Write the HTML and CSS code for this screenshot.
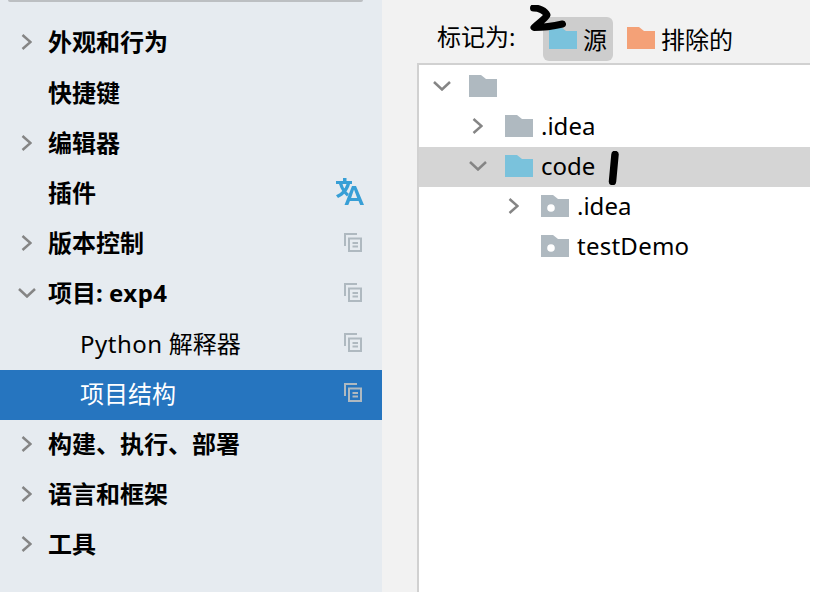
FILE: index.html
```html
<!DOCTYPE html>
<html lang="zh-CN">
<head>
<meta charset="utf-8">
<title>项目结构</title>
<link rel="stylesheet" href="styles.css">
</head>
<body>
<svg class="defs" width="0" height="0" aria-hidden="true">
  <defs>
    <symbol id="chev-r" viewBox="0 0 11 16"><path d="M1.500 1 9.500 8 1.500 15" fill="none" stroke="#858585" stroke-width="2.500"/></symbol>
    <symbol id="chev-d" viewBox="0 0 18 10"><path d="M1 1 9 8.500 17 1" fill="none" stroke="#858585" stroke-width="2.500"/></symbol>
    <symbol id="folder" viewBox="0 0 28 22"><path d="M0 0H12L17 4H28V22H0Z"/></symbol>
    <symbol id="folder-dot" viewBox="0 0 28 22"><path d="M0 0H12L17 4H28V22H0Z" fill="#afb9c0"/><circle cx="10" cy="13" r="3.800" fill="#fff"/></symbol>
    <symbol id="layers" viewBox="0 0 18 19"><path d="M13 1H1V13" fill="none" stroke="#afb9c0" stroke-width="2"/><path d="M5 5.500H17V18H5ZM8.500 10H14M8.500 13.500H14" fill="none" stroke="#afb9c0" stroke-width="2"/></symbol>
  </defs>
</svg>
<div class="app">
  <aside class="sidebar">
    <div class="search-edge"></div>
    <ul class="nav">
      <li class="nav-row bold"><svg class="chev"><use href="#chev-r"/></svg><span class="label">外观和行为</span></li>
      <li class="nav-row bold"><span class="chev"></span><span class="label">快捷键</span></li>
      <li class="nav-row bold"><svg class="chev"><use href="#chev-r"/></svg><span class="label">编辑器</span></li>
      <li class="nav-row bold"><span class="chev"></span><span class="label">插件</span>
        <svg class="translate" viewBox="0 0 28 27"><path d="M7 0H10.500V3H16V6H0V3H7ZM3 6H6.500C7.500 10 10 13.500 13 16L11 18.500C7.500 15.500 4.500 11 3 6ZM10.500 6H14C12.500 12 8.500 17 2 20L0 17.200C5.500 14.800 9 11 10.500 6Z" fill="#389fd6"/><path d="M16 8H20L28 27H24.200L22.600 23H13.900L12.300 27H8.500ZM18 11.500 15.100 20H21.200Z" fill="#389fd6"/></svg></li>
      <li class="nav-row bold"><svg class="chev"><use href="#chev-r"/></svg><span class="label">版本控制</span><svg class="layer-icon"><use href="#layers"/></svg></li>
      <li class="nav-row bold"><svg class="chev-open"><use href="#chev-d"/></svg><span class="label">项目: <span class="latin-wide">exp4</span></span><svg class="layer-icon"><use href="#layers"/></svg></li>
      <li class="nav-row child"><span class="label"><span class="latin-wide">Python</span> 解释器</span><svg class="layer-icon"><use href="#layers"/></svg></li>
      <li class="nav-row child selected"><span class="label">项目结构</span><svg class="layer-icon"><use href="#layers"/></svg></li>
      <li class="nav-row bold"><svg class="chev"><use href="#chev-r"/></svg><span class="label">构建、执行、部署</span></li>
      <li class="nav-row bold"><svg class="chev"><use href="#chev-r"/></svg><span class="label">语言和框架</span></li>
      <li class="nav-row bold"><svg class="chev"><use href="#chev-r"/></svg><span class="label">工具</span></li>
    </ul>
  </aside>
  <main class="content">
    <div class="toolbar">
      <span class="mark-label">标记为:</span>
      <div class="tool-btn active"><svg class="folder blue"><use href="#folder"/></svg><span>源</span></div>
      <div class="tool-btn"><svg class="folder orange"><use href="#folder"/></svg><span>排除的</span></div>
      <svg class="scribble-two" viewBox="0 0 36 28"><path d="M3.500 3C9 3 15 5.500 17 10C16 13 10 17 4 22.500C12 22.500 24 21 32.500 19" fill="none" stroke="#000" stroke-width="7" stroke-linecap="round" stroke-linejoin="round"/></svg>
    </div>
    <div class="tree">
      <div class="tree-row"><span class="twist"><svg class="chev-open"><use href="#chev-d"/></svg></span><svg class="folder gray"><use href="#folder"/></svg></div>
      <div class="tree-row depth-1"><span class="twist"><svg class="chev"><use href="#chev-r"/></svg></span><svg class="folder gray"><use href="#folder"/></svg><span class="name">.idea</span></div>
      <div class="tree-row depth-1 picked"><span class="twist"><svg class="chev-open"><use href="#chev-d"/></svg></span><svg class="folder blue"><use href="#folder"/></svg><span class="name">code</span>
        <svg class="scribble-one" viewBox="0 0 11 34"><path d="M7 3.500 4.500 30.500" fill="none" stroke="#000" stroke-width="7.500" stroke-linecap="round"/></svg></div>
      <div class="tree-row depth-2"><span class="twist"><svg class="chev"><use href="#chev-r"/></svg></span><svg class="folder"><use href="#folder-dot"/></svg><span class="name">.idea</span></div>
      <div class="tree-row depth-2"><span class="twist"></span><svg class="folder"><use href="#folder-dot"/></svg><span class="name wide">testDemo</span></div>
    </div>
  </main>
</div>
</body>
</html>
```
FILE: styles.css
```css
* { box-sizing: border-box; }
html, body { margin: 0; height: 100%; overflow: hidden; }
body {
  font-family: "Noto Sans", "Noto Sans CJK SC", sans-serif;
  font-size: 24px;
  color: #000;
  background: #fff;
}
.defs { position: absolute; }
.app { display: flex; width: 810px; height: 592px; background: #f2f2f2; }

.sidebar { flex: 0 0 382px; background: #e6ebf0; }
.search-edge { height: 2px; margin: 0 19px 0 8px; background: #bcbfc2; border-radius: 0 0 2px 2px; }
.nav { list-style: none; margin: 0; padding: 16.4px 0 0; }
.nav-row { display: flex; align-items: center; height: 50.2px; padding: 0 20px 2px 21px; }
.nav-row.bold { font-weight: 700; }
.nav-row .label { white-space: nowrap; line-height: 30px; }
.latin-wide { letter-spacing: 0.5px; }
.nav-row .chev { flex: 0 0 11px; width: 11px; height: 16px; margin-right: 16px; }
.nav-row > .chev-open { flex: 0 0 18px; width: 18px; height: 10px; margin: 0 12px 0 -3px; }
.nav-row.child { padding-left: 80px; }
.nav-row.selected { background: #2675bf; color: #fff; }
.layer-icon { width: 18px; height: 19px; margin: 0 0 2px auto; }
.translate { width: 28px; height: 27px; margin: 0 -2px 3px auto; }

.content { flex: 1; display: flex; flex-direction: column; min-width: 0; padding-left: 35px; }
.toolbar { position: relative; flex: 0 0 63px; display: flex; align-items: flex-end; padding: 0 0 2px 20px; }
.mark-label { width: 106px; padding-bottom: 9px; white-space: nowrap; line-height: 30px; }
.tool-btn { display: flex; align-items: center; gap: 6px; height: 44px; padding: 0 6px; margin-right: 8px; line-height: 30px; border-radius: 6px; white-space: nowrap; }
.tool-btn.active { background: #cdcdcd; }
.tool-btn .folder { margin-bottom: 2px; }
.tool-btn span { margin-top: 2px; }
.scribble-two { position: absolute; left: 113px; top: 5px; width: 36px; height: 28px; }

.tree { flex: 1; background: #fff; border-top: 2px solid #d1d1d1; border-left: 2px solid #d1d1d1; padding-top: 2px; }
.tree-row { position: relative; display: flex; align-items: center; height: 40px; padding: 0 0 2px 14px; }
.tree-row.depth-1 { padding-left: 50px; }
.tree-row.depth-2 { padding-left: 86px; }
.tree-row.picked { background: #d5d5d5; }
.twist { flex: 0 0 36px; display: flex; align-items: center; }
.twist .chev { width: 11px; height: 16px; margin-left: 3px; }
.twist .chev-open { width: 18px; height: 10px; }
.folder { flex: 0 0 28px; width: 28px; height: 22px; }
.folder.gray { fill: #afb9c0; }
.folder.blue { fill: #7ac2dc; }
.folder.orange { fill: #f4a177; }
.name { margin-left: 8px; line-height: 30px; }
.name.wide { letter-spacing: 0.25px; }
.scribble-one { position: absolute; left: 189px; top: 4px; width: 11px; height: 34px; }
```
